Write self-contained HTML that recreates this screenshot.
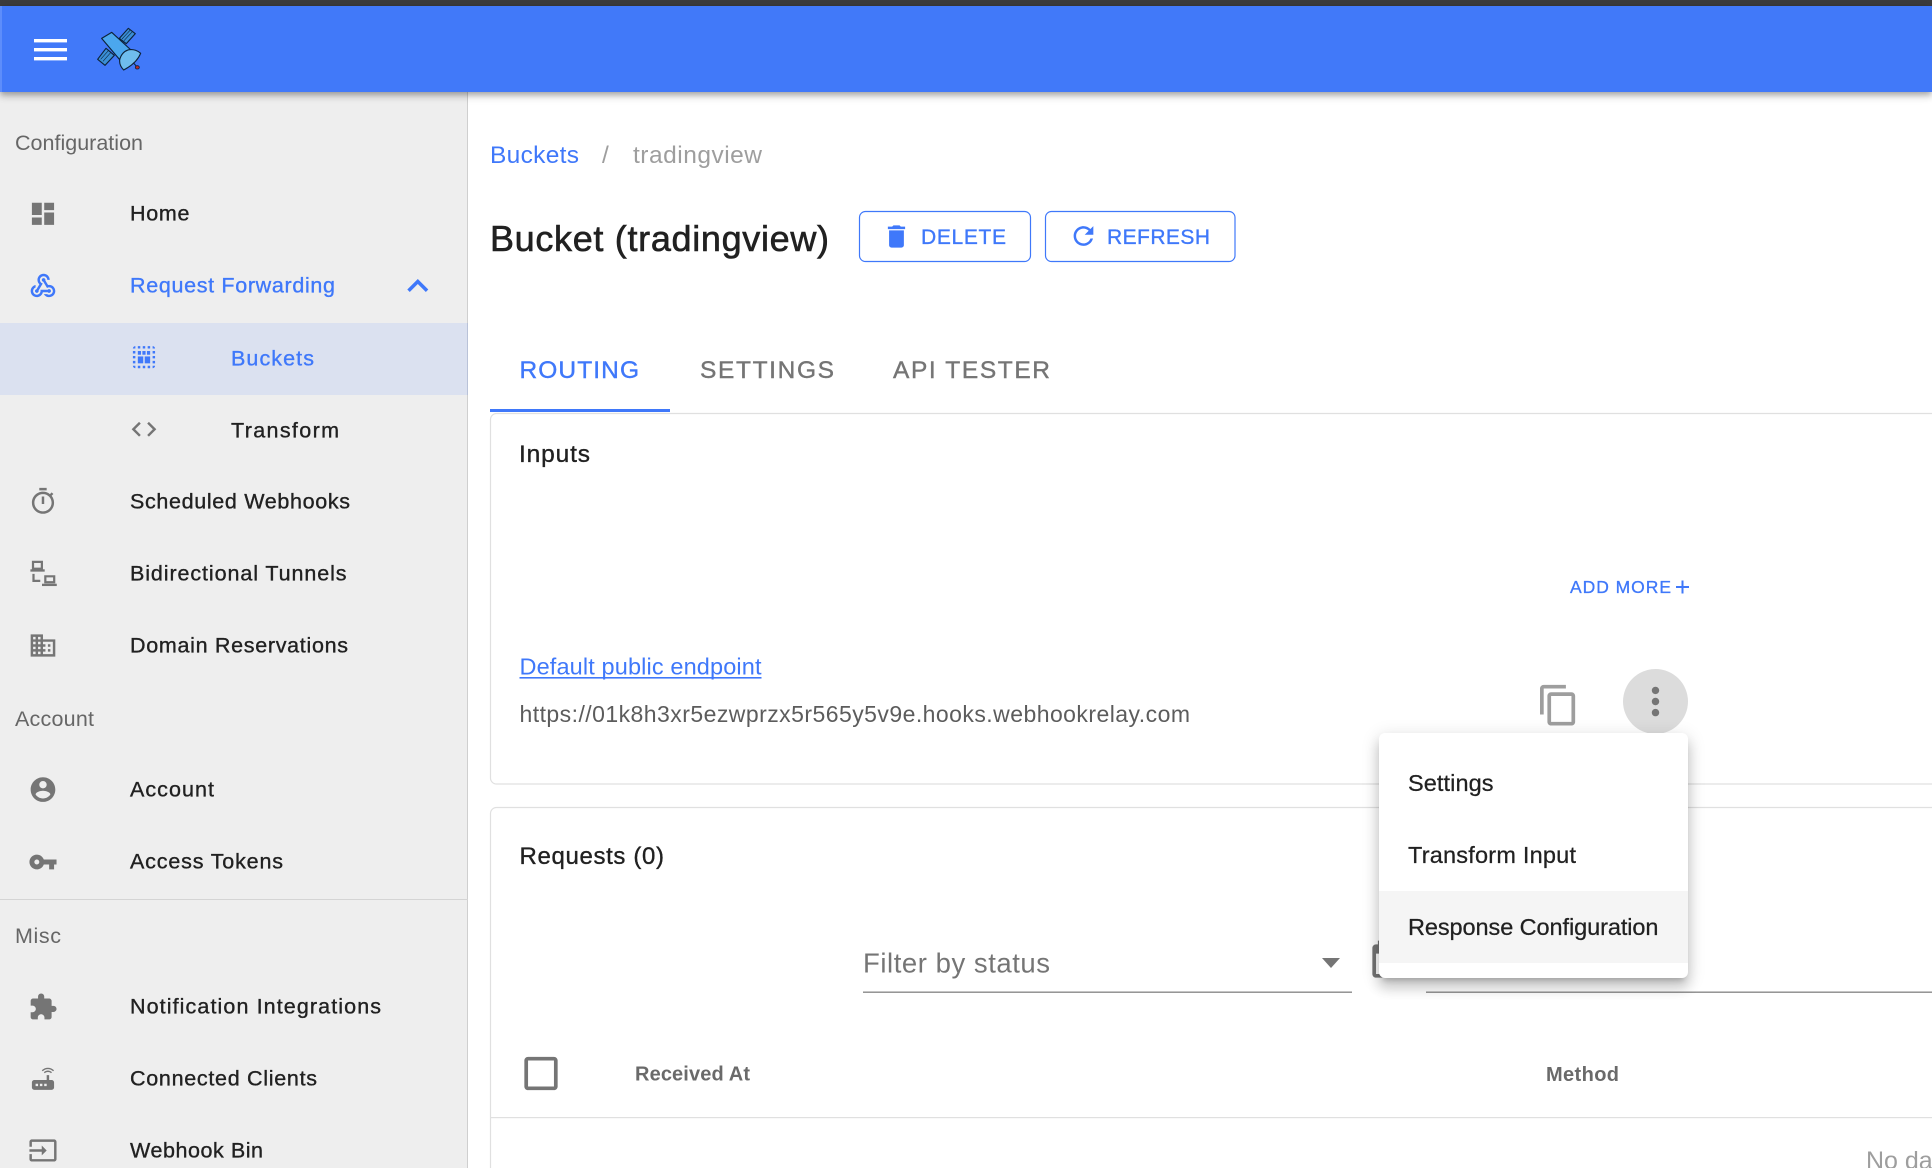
<!DOCTYPE html>
<html lang="en"><head><meta charset="utf-8"><title>Bucket (tradingview)</title>
<style>
html,body{margin:0;padding:0;width:1932px;height:1168px;overflow:hidden;background:#fff}
svg{display:block;position:absolute;left:0;top:0;overflow:hidden}
text{font-family:"Liberation Sans",Arial,sans-serif;white-space:pre}
.i{font-size:21.5px;fill:#212121;stroke:#212121;stroke-width:.35}
.b{fill:#3f78fa;stroke:#3f78fa}
.s{font-size:21.5px;fill:#666}
.ic{fill:#757575}
.m{font-size:23.5px;fill:#212121;stroke:#212121;stroke-width:.25}
.t{font-size:24.5px;fill:#757575;stroke:#757575;stroke-width:.4}
.btn{font-size:21px;fill:#3f78fa;stroke:#3f78fa;stroke-width:.35}
.th{font-size:20px;fill:#6a6a6a;font-weight:700}
#hd{position:absolute;left:0;top:6px;width:1932px;height:86px;background:#4179f9;box-shadow:0 2.5px 5px -1px rgba(0,0,0,.2),0 5px 6px 0 rgba(0,0,0,.14),0 1px 12px 0 rgba(0,0,0,.12)}
#top{position:absolute;left:0;top:0;width:1932px;height:6px;background:#3c3c3c}
#mn{position:absolute;left:1379px;top:733px;width:309px;height:245px;background:#fff;border-radius:6px;box-shadow:0 6px 6px -4px rgba(0,0,0,.2),0 10px 12px 1px rgba(0,0,0,.14),0 4px 17px 2px rgba(0,0,0,.12)}
</style></head><body>
<svg width="1932" height="1168" viewBox="0 0 1932 1168">
<rect x="0" y="0" width="467" height="1168" fill="#eeeeee"/>
<rect x="467" y="0" width="1" height="1168" fill="#cfcfcf"/>
<rect x="0" y="323" width="467" height="72" fill="#dbe1f0"/>
<rect x="467" y="323" width="1" height="72" fill="#b9c2d8"/>
<rect x="0" y="899" width="468" height="1" fill="#d4d4d4"/>

<text class="s" x="15" y="150" textLength="128">Configuration</text>
<text class="s" x="15" y="726" textLength="79" fill="#757575">Account</text>
<text class="s" x="15" y="943" textLength="46">Misc</text>

<text class="i" x="130" y="220.5" textLength="59.5">Home</text>
<text class="i b" x="130" y="292.5" textLength="205">Request Forwarding</text>
<text class="i b" x="231" y="365.5" textLength="83">Buckets</text>
<text class="i" x="231" y="437.5" textLength="108">Transform</text>
<text class="i" x="130" y="508.5" textLength="220">Scheduled Webhooks</text>
<text class="i" x="130" y="580.5" textLength="216.5">Bidirectional Tunnels</text>
<text class="i" x="130" y="652.5" textLength="218">Domain Reservations</text>
<text class="i" x="130" y="796.5" textLength="84">Account</text>
<text class="i" x="130" y="868.5" textLength="153">Access Tokens</text>
<text class="i" x="130" y="1013.5" textLength="251">Notification Integrations</text>
<text class="i" x="130" y="1085.5" textLength="187">Connected Clients</text>
<text class="i" x="130" y="1157.5" textLength="133">Webhook Bin</text>

<!-- sidebar icons -->
<g class="ic">
<path transform="translate(28.2 199) scale(1.232)" d="M3 13h8V3H3v10zm0 8h8v-6H3v6zm10 0h8V11h-8v10zm0-18v6h8V3h-8z"/>
<path transform="translate(129.2 414.5) scale(1.232)" d="M9.4 16.6L4.8 12l4.6-4.6L8 6l-6 6 6 6 1.4-1.4zm5.2 0l4.6-4.6-4.6-4.6L16 6l6 6-6 6-1.4-1.4z"/>
<path transform="translate(28.2 486.7) scale(1.232)" d="M15 1H9v2h6V1zm-4 13h2V8h-2v6zm8.03-6.61l1.42-1.42c-.43-.51-.9-.99-1.41-1.41l-1.42 1.42C16.07 4.74 14.12 4 12 4c-4.97 0-9 4.03-9 9s4.02 9 9 9 9-4.03 9-9c0-2.12-.74-4.07-1.97-5.61zM12 20c-3.87 0-7-3.13-7-7s3.13-7 7-7 7 3.13 7 7-3.13 7-7 7z"/>
<g transform="translate(28.2 558.7) scale(1.232)">
<path fill-rule="evenodd" d="M3 1.7h9v7.1H3zM4.8 3.5v3.7h5.4V3.5z"/>
<rect x="1.8" y="8.6" width="11.6" height="1.9"/>
<path d="M3.4 12.3H5.2v4.8h4.6v1.8H3.4z"/>
<path fill-rule="evenodd" d="M13 13.4h9v6.6h-9zM14.8 15.2v3h5.4v-3z"/>
<rect x="11.2" y="20.3" width="12" height="1.9"/>
</g>
<path transform="translate(28.2 630.7) scale(1.232)" d="M12 7V3H2v18h20V7H12zM6 19H4v-2h2v2zm0-4H4v-2h2v2zm0-4H4V9h2v2zm0-4H4V5h2v2zm4 12H8v-2h2v2zm0-4H8v-2h2v2zm0-4H8V9h2v2zm0-4H8V5h2v2zm10 12h-8v-2h2v-2h-2v-2h2v-2h-2V9h8v10zm-2-8h-2v2h2v-2zm0 4h-2v2h2v-2z"/>
<path transform="translate(28.2 774.8) scale(1.232)" d="M12 2C6.48 2 2 6.48 2 12s4.48 10 10 10 10-4.48 10-10S17.52 2 12 2zm0 3c1.66 0 3 1.34 3 3s-1.34 3-3 3-3-1.34-3-3 1.34-3 3-3zm0 14.2c-2.5 0-4.71-1.28-6-3.22.03-1.99 4-3.08 6-3.08 1.99 0 5.97 1.09 6 3.08-1.29 1.94-3.5 3.22-6 3.22z"/>
<path transform="translate(28.2 847.2) scale(1.232)" d="M12.65 10C11.83 7.67 9.61 6 7 6c-3.31 0-6 2.69-6 6s2.69 6 6 6c2.61 0 4.83-1.67 5.65-4H17v4h4v-4h2v-4H12.65zM7 14c-1.1 0-2-.9-2-2s.9-2 2-2 2 .9 2 2-.9 2-2 2z"/>
<path transform="translate(28.2 992.3) scale(1.232)" d="M20.5 11H19V7c0-1.1-.9-2-2-2h-4V3.5C13 2.12 11.88 1 10.5 1S8 2.12 8 3.5V5H4c-1.1 0-1.99.9-1.99 2v3.8H3.5c1.49 0 2.7 1.21 2.7 2.7s-1.21 2.7-2.7 2.7H2V20c0 1.1.9 2 2 2h3.8v-1.5c0-1.49 1.21-2.7 2.7-2.7 1.49 0 2.7 1.21 2.7 2.7V22H17c1.1 0 2-.9 2-2v-4h1.5c1.38 0 2.5-1.12 2.5-2.5S21.88 11 20.5 11z"/>
<path transform="translate(28.2 1064) scale(1.232)" d="M20.2 5.9l.8-.8C19.6 3.7 17.8 3 16 3s-3.6.7-5 2.1l.8.8C13 4.8 14.5 4.2 16 4.2s3 .6 4.2 1.7zm-.9.8c-.9-.9-2.1-1.4-3.3-1.4s-2.4.5-3.3 1.4l.8.8c.7-.7 1.6-1 2.5-1 .9 0 1.8.3 2.5 1l.8-.8zM19 13h-2V9h-2v4H5c-1.1 0-2 .9-2 2v4c0 1.1.9 2 2 2h14c1.1 0 2-.9 2-2v-4c0-1.1-.9-2-2-2zM8 18H6v-2h2v2zm3.5 0h-2v-2h2v2zm3.5 0h-2v-2h2v2z"/>
<path transform="translate(28.2 1135.7) scale(1.232)" d="M21 3.01H3c-1.1 0-2 .9-2 2V9h2V4.99h18v14.03H3V15H1v4.01c0 1.1.9 1.98 2 1.98h18c1.1 0 2-.88 2-1.98v-14c0-1.11-.9-2-2-2zM11 16l4-4-4-4v3H1v2h10v3z"/>
</g>
<g fill="#3f78fa">
<path transform="translate(28.2 271.3) scale(1.232)" d="M10 15h5.88c.27-.31.67-.5 1.12-.5.83 0 1.5.67 1.5 1.5s-.67 1.5-1.5 1.5c-.44 0-.84-.19-1.12-.5H11.9c-.46 2.28-2.48 4-4.9 4-2.76 0-5-2.24-5-5 0-2.42 1.72-4.44 4-4.9v2.07c-1.16.41-2 1.53-2 2.83 0 1.65 1.35 3 3 3s3-1.35 3-3v-1zm2.5-11c1.65 0 3 1.35 3 3h2c0-2.76-2.24-5-5-5s-5 2.24-5 5c0 1.43.6 2.71 1.55 3.62l-2.35 3.9c-.68.14-1.2.75-1.2 1.48 0 .83.67 1.5 1.5 1.5s1.5-.67 1.5-1.5c0-.16-.02-.31-.07-.45l3.38-5.63C10.49 9.61 9.5 8.42 9.5 7c0-1.65 1.35-3 3-3zm4.5 9c-.64 0-1.23.2-1.72.54l-3.05-5.07C11.53 8.35 11 7.74 11 7c0-.83.67-1.5 1.5-1.5S14 6.17 14 7c0 .15-.02.29-.06.43l2.19 3.65c.28-.05.57-.08.87-.08 2.76 0 5 2.24 5 5s-2.24 5-5 5c-1.85 0-3.47-1.01-4.33-2.5h2.67c.48.32 1.05.5 1.66.5 1.65 0 3-1.35 3-3s-1.35-3-3-3z"/>
<path transform="translate(396.8 265) scale(1.75)" d="M12 8l-6 6 1.41 1.41L12 10.83l4.59 4.58L18 14z"/>
<g transform="translate(129.2 342.4) scale(1.232)">
<path d="M3 5h2V3c-1.1 0-2 .9-2 2zm0 8h2v-2H3v2zm4 8h2v-2H7v2zM3 9h2V7H3v2zm10-6h-2v2h2V3zm6 0v2h2c0-1.1-.9-2-2-2zM5 21v-2H3c0 1.1.9 2 2 2zm-2-4h2v-2H3v2zM9 3H7v2h2V3zm2 18h2v-2h-2v2zm8-8h2v-2h-2v2zm0 8c1.1 0 2-.9 2-2h-2v2zm0-12h2V7h-2v2zm0 8h2v-2h-2v2zm-4 4h2v-2h-2v2zm0-16h2V3h-2v2z"/>
<rect x="7" y="7" width="2.6" height="3"/><rect x="10.7" y="7" width="2.6" height="3"/><rect x="14.4" y="7" width="2.6" height="3"/>
<rect x="7" y="11.4" width="4.4" height="5.6"/><rect x="12.6" y="11.4" width="4.4" height="5.6"/>
</g>
</g>

<!-- main header -->
<text x="490" y="163" font-size="24.5" fill="#3f78fa" textLength="89">Buckets</text>
<text x="602" y="163" font-size="24.5" fill="#9e9e9e" textLength="8">/</text>
<text x="633" y="163" font-size="24.5" fill="#9e9e9e" textLength="129">tradingview</text>
<text x="490" y="251" font-size="36" fill="#212121" stroke="#212121" stroke-width=".6" textLength="339">Bucket (tradingview)</text>

<rect x="859.5" y="211.5" width="171" height="50" rx="6" fill="none" stroke="#3f78fa" stroke-width="1.2"/>
<rect x="1045.5" y="211.5" width="189.5" height="50" rx="6" fill="none" stroke="#3f78fa" stroke-width="1.2"/>
<path fill="#3f78fa" transform="translate(881.7 221.7) scale(1.232)" d="M6 19c0 1.1.9 2 2 2h8c1.1 0 2-.9 2-2V7H6v12zM19 4h-3.5l-1-1h-5l-1 1H5v2h14V4z"/>
<path fill="#3f78fa" transform="translate(1068.7 221.2) scale(1.232)" d="M17.65 6.35C16.2 4.9 14.21 4 12 4c-4.42 0-7.99 3.58-7.99 8s3.57 8 7.99 8c3.73 0 6.84-2.55 7.73-6h-2.08c-.82 2.33-3.04 4-5.65 4-3.31 0-6-2.69-6-6s2.69-6 6-6c1.66 0 3.14.69 4.22 1.78L13 11h7V4l-2.35 2.35z"/>
<text class="btn" x="921" y="244" textLength="85">DELETE</text>
<text class="btn" x="1107" y="244" textLength="103">REFRESH</text>

<!-- tabs -->
<text class="t" x="519.5" y="378" textLength="119.5" style="fill:#3f78fa;stroke:#3f78fa">ROUTING</text>
<text class="t" x="700" y="378" textLength="134">SETTINGS</text>
<text class="t" x="893" y="378" textLength="157">API TESTER</text>

<!-- cards -->
<rect x="490.5" y="413.5" width="1600" height="370.5" rx="6" fill="#fff" stroke="#e0e0e0" stroke-width="1.2"/>
<rect x="490.5" y="807.5" width="1600" height="600" rx="6" fill="#fff" stroke="#e0e0e0" stroke-width="1.2"/>
<rect x="490" y="409" width="180" height="3" fill="#3f78fa"/>

<text x="519" y="462" font-size="24.5" fill="#212121" stroke="#212121" stroke-width=".35" textLength="71">Inputs</text>
<text x="1570" y="593" font-size="17.5" fill="#3f78fa" stroke="#3f78fa" stroke-width=".3" textLength="101">ADD MORE</text>
<path d="M1676 587h13M1682.5 580.5v13" stroke="#3f78fa" stroke-width="2" fill="none"/>

<text x="519.5" y="674.5" font-size="23.5" fill="#3f78fa" textLength="242">Default public endpoint</text>
<rect x="519.5" y="677" width="242" height="1.6" fill="#3f78fa"/>
<text x="519.5" y="722" font-size="23" fill="#5c5c5c" textLength="670.5">https://01k8h3xr5ezwprzx5r565y5v9e.hooks.webhookrelay.com</text>

<path fill="#9e9e9e" transform="translate(1536.3 683) scale(1.85)" d="M16 1H4c-1.1 0-2 .9-2 2v14h2V3h12V1zm3 4H8c-1.1 0-2 .9-2 2v14c0 1.1.9 2 2 2h11c1.1 0 2-.9 2-2V7c0-1.1-.9-2-2-2zm0 16H8V7h11v14z"/>
<circle cx="1655.5" cy="701.5" r="32.5" fill="#dcdcdc"/>
<path fill="#757575" transform="translate(1633.3 679.3) scale(1.85)" d="M12 8c1.1 0 2-.9 2-2s-.9-2-2-2-2 .9-2 2 .9 2 2 2zm0 2c-1.1 0-2 .9-2 2s.9 2 2 2 2-.9 2-2-.9-2-2-2zm0 6c-1.1 0-2 .9-2 2s.9 2 2 2 2-.9 2-2-.9-2-2-2z"/>

<text x="519.5" y="864" font-size="24" fill="#212121" stroke="#212121" stroke-width=".35" textLength="144.5">Requests (0)</text>

<text x="863" y="972.5" font-size="27.5" fill="#757575" textLength="187">Filter by status</text>
<path d="M1322 958h18l-9 10z" fill="#757575"/>
<rect x="863" y="991.5" width="489" height="1.4" fill="#8a8a8a"/>
<rect x="1426" y="991.5" width="506" height="1.4" fill="#8a8a8a"/>
<path fill="#757575" transform="translate(1366.8 938.8) scale(1.85)" d="M19 3h-1V1h-2v2H8V1H6v2H5c-1.1 0-2 .9-2 2v14c0 1.1.9 2 2 2h14c1.1 0 2-.9 2-2V5c0-1.1-.9-2-2-2zm0 16H5V8h14v11z"/>

<path fill="#757575" transform="translate(518.8 1051.3) scale(1.85)" d="M19 5v14H5V5h14m0-2H5c-1.1 0-2 .9-2 2v14c0 1.1.9 2 2 2h14c1.1 0 2-.9 2-2V5c0-1.1-.9-2-2-2z"/>
<text class="th" x="635" y="1080.5" textLength="115">Received At</text>
<text class="th" x="1546" y="1081" textLength="73">Method</text>
<rect x="491" y="1117" width="1441" height="1.2" fill="#e0e0e0"/>
<text x="1866" y="1169" font-size="25" fill="#9e9e9e">No data</text>
</svg>

<div id="top"></div>
<div id="hd">
<svg width="1932" height="86" viewBox="0 6 1932 86">
<rect x="0" y="6" width="2" height="86" fill="#5d8dfb"/>
<rect x="34" y="39" width="33" height="3.4" fill="#fff"/>
<rect x="34" y="48" width="33" height="3.4" fill="#fff"/>
<rect x="34" y="57" width="33" height="3.4" fill="#fff"/>
<g transform="scale(.3333)" stroke="#0d2238" stroke-width="3.4" stroke-linejoin="round">
<polygon points="358,115 385,85 406,101 379,131" fill="#3b8fd6"/>
<polygon points="293,178 318,145 343,166 315,196" fill="#3b8fd6"/>
<path d="M366 117l25-27M372 122l25-27M302 178l24-27M309 184l24-27" stroke-width="1.7" fill="none"/>
<polygon points="305,115 335,97 393,150 360,180" fill="#4ba7ee"/>
<path d="M398 186l14 16" fill="none" stroke-width="3"/>
<ellipse cx="412" cy="202" rx="6" ry="5" fill="#c0292b" stroke-width="2.5"/>
<path d="M359 180C362 165 372 152 388 149C400 147 414 152 422 160C414 180 394 198 371 210C363 202 358 192 359 180Z" fill="#6fbdee"/>
</g>
</svg>
</div>

<div id="mn">
<svg width="309" height="245" viewBox="1379 733 309 245" style="border-radius:6px">
<rect x="1379" y="891" width="309" height="72" fill="#f5f5f5"/>
<text class="m" x="1408" y="791" textLength="85.5">Settings</text>
<text class="m" x="1408" y="863" textLength="168">Transform Input</text>
<text class="m" x="1408" y="935" textLength="250.5">Response Configuration</text>
</svg>
</div>
</body></html>
